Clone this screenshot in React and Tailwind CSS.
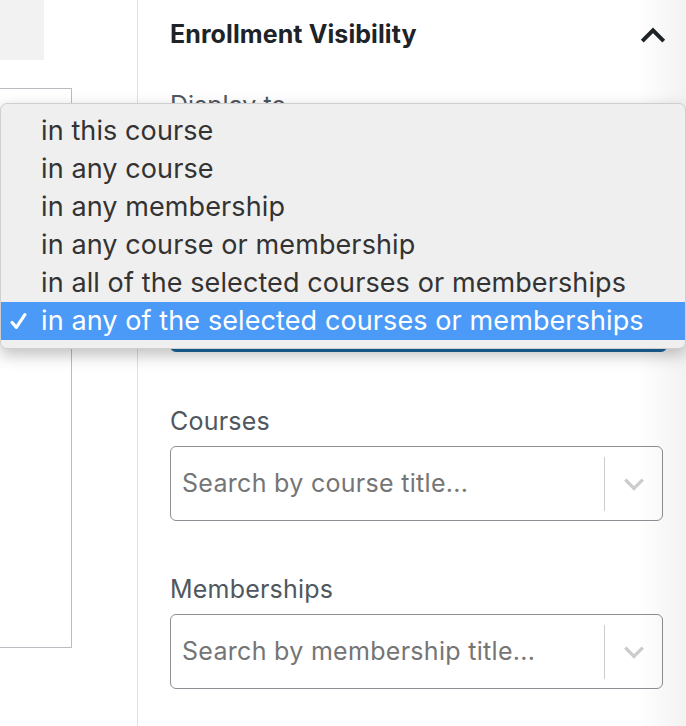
import React from "react";

const options = [
  "in this course",
  "in any course",
  "in any membership",
  "in any course or membership",
  "in all of the selected courses or memberships",
  "in any of the selected courses or memberships",
];

const Chevron = ({ up, className, width = 3 }) => (
  <svg viewBox="0 0 24 24" className={className} fill="none" stroke="currentColor" strokeWidth={width} strokeLinecap="square">
    {up ? <path d="M4 16l8-8 8 8" /> : <path d="M5 9l7 7 7-7" />}
  </svg>
);

const SearchSelect = ({ placeholder }) => (
  <div className="h-[75px] w-[493px] rounded-[6px] border border-[#8c8f94] flex items-center">
    <span className="flex-1 pl-[11px] text-[25px] tracking-[0.3px] text-[#757575]">{placeholder}</span>
    <div className="w-px h-[54px] bg-[#cccccc]" />
    <div className="w-[57px] flex justify-center">
      <Chevron className="w-[26px] h-[26px] text-[#cccccc]" />
    </div>
  </div>
);

export default function App() {
  return (
    <div className="relative w-[686px] h-[726px] overflow-hidden bg-white flex" style={{ fontFamily: "Inter, 'Noto Sans', sans-serif" }}>
      {/* left editor area */}
      <div className="w-[138px] shrink-0 border-r border-[#e0e0e0] flex flex-col">
        <div className="w-[44px] h-[60px] bg-[#f2f2f2]" />
        <div className="mt-[28px] w-[72px] h-[560px] border-y border-r border-[#b9bdc1]" />
      </div>

      {/* sidebar panel */}
      <div className="flex-1 pl-[32px] pr-[22px]">
        <div className="h-[70px] flex items-center justify-between">
          <span className="text-[25px] font-bold tracking-[0.1px] text-[#1d2327]">Enrollment Visibility</span>
          <Chevron up width={3.4} className="w-[28px] h-[28px] text-[#1d2327]" />
        </div>
        <div className="text-[25px] text-[#50575e] leading-[30px] mt-[20px]">Display to</div>
        <div className="mt-[172px] h-[60px] w-[497px] rounded-[6px] border-[4px] border-[#1b6aa3]" />

        <div className="mt-[54px] text-[25px] tracking-[0.2px] text-[#50575e] leading-[30px]">Courses</div>
        <div className="mt-[10px]">
          <SearchSelect placeholder="Search by course title..." />
        </div>

        <div className="mt-[53px] text-[25px] tracking-[0.2px] text-[#50575e] leading-[30px]">Memberships</div>
        <div className="mt-[10px]">
          <SearchSelect placeholder="Search by membership title..." />
        </div>
      </div>

      {/* right scroll shade */}
      <div className="absolute top-0 right-0 w-[50px] h-full bg-gradient-to-r from-transparent to-black/5 pointer-events-none" />

      {/* native select menu */}
      <div className="absolute left-0 top-[103px] w-[686px] rounded-[7px] bg-[#efefef] border border-[#cfcfcf] shadow-[0_6px_16px_rgba(0,0,0,0.25)] py-[8px]">
        {options.map((o, i) => {
          const sel = i === options.length - 1;
          return (
            <div
              key={o}
              className={`h-[38px] flex items-center text-[27px] tracking-[0.1px] ${sel ? "bg-[#4b9af8] text-white" : "text-[#333333]"}`}
            >
              <span className="w-[40px] pl-[9px] flex items-center">
                {sel && (
                  <svg viewBox="0 0 16 16" className="w-[17px] h-[19px]" fill="none" stroke="white" strokeWidth="3" strokeLinecap="round" strokeLinejoin="round">
                    <path d="M2 9l4 4.5 8-12" />
                  </svg>
                )}
              </span>
              <span>{o}</span>
            </div>
          );
        })}
      </div>
    </div>
  );
}
